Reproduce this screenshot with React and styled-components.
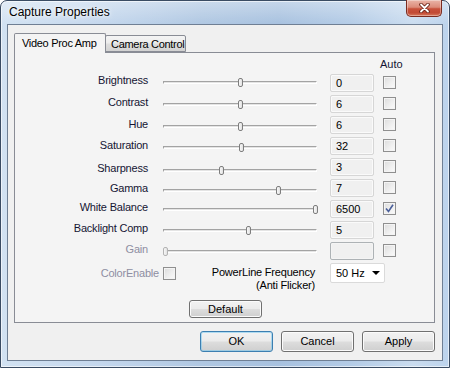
import React from 'react';
import styled, { createGlobalStyle } from 'styled-components';

const Global = createGlobalStyle`
  html, body { margin: 0; padding: 0; background: #ffffff; }
  body {
    width: 450px; height: 368px; overflow: hidden;
    font-family: "Liberation Sans", Arial, sans-serif;
    -webkit-font-smoothing: antialiased;
  }
  * { box-sizing: border-box; }
`;

const FONT = `"Liberation Sans", Arial, sans-serif`;

const Window = styled.div`
  width: 450px;
  height: 368px;
  display: flex;
  flex-direction: column;
  padding: 0 6px 6px 6px;
  border: 1px solid #3a4c63;
  border-radius: 7px 7px 0 0;
  background:
    linear-gradient(180deg, rgba(255,255,255,0.35) 0px, rgba(255,255,255,0) 24px),
    linear-gradient(90deg, #d2e2f2 0%, #c4d7ed 22%, #afc7e2 45%, #a7c1df 62%, #b3cbe6 78%, #cadcef 92%, #bcd3ec 100%);
  box-shadow: inset 0 0 0 1px rgba(255,255,255,0.6);
`;

const TitleBar = styled.div`
  flex: none;
  height: 23px;
  display: flex;
  align-items: flex-start;
`;

const Title = styled.div`
  padding: 4px 0 0 2px;
  font: 12px/14px ${FONT};
  color: #000;
  text-shadow: 0 0 6px rgba(255,255,255,0.95), 0 0 3px rgba(255,255,255,0.9);
`;

const CloseButton = styled.div`
  margin-left: auto;
  margin-right: 1px;
  margin-top: -1px;
  width: 36px;
  height: 17px;
  display: flex;
  align-items: center;
  justify-content: center;
  border: 1px solid #7b2c20;
  border-top: none;
  border-radius: 0 0 5px 5px;
  background: linear-gradient(180deg, #eab4a7 0%, #dc8c7a 45%, #c8503a 55%, #c24a34 80%, #d97a5c 100%);
  box-shadow: inset 0 0 0 1px rgba(255,255,255,0.35);
`;

const Client = styled.div`
  flex: 1;
  display: flex;
  flex-direction: column;
  background: #f0f0f0;
  border: 1px solid #6f7f94;
  padding: 8px 7px 0 6px;
`;

const TabStrip = styled.div`
  flex: none;
  height: 19px;
  display: flex;
  align-items: flex-end;
`;

const Tab = styled.div`
  position: relative;
  z-index: ${p => (p.$active ? 2 : 1)};
  height: ${p => (p.$active ? '20px' : '17px')};
  margin-bottom: ${p => (p.$active ? '-1px' : '0')};
  margin-left: ${p => (p.$active ? '0' : '-1px')};
  width: ${p => p.$w}px;
  padding-left: ${p => (p.$active ? '7px' : '5px')};
  border: 1px solid #898c95;
  border-bottom: ${p => (p.$active ? 'none' : '1px solid #898c95')};
  border-radius: 2px 2px 0 0;
  background: ${p =>
    p.$active
      ? '#f4f4f4'
      : 'linear-gradient(180deg, #f4f4f4 0%, #ececec 48%, #dedede 52%, #d2d2d2 100%)'};
  font: 11px/${p => (p.$active ? '18px' : '16px')} ${FONT};
  letter-spacing: -0.3px;
  color: #000;
  white-space: nowrap;
`;

const Panel = styled.div`
  flex: none;
  height: 271px;
  display: flex;
  flex-direction: column;
  background: #f4f4f4;
  border: 1px solid #898c95;
`;

const HeaderRow = styled.div`
  height: 21px;
  padding: 5px 0 0 365px;
  font: 11px/13px ${FONT};
  color: #141433;
`;

const Row = styled.div`
  height: 21px;
  display: flex;
  align-items: flex-start;
`;

const Group = styled.div`
  display: flex;
  margin-top: ${p => p.$dy}px;
`;

const Label = styled.div`
  width: ${p => p.$w || 145}px;
  padding-right: ${p => (p.$pr === undefined ? 12 : p.$pr)}px;
  text-align: right;
  font: 11px/13px ${FONT};
  letter-spacing: -0.2px;
  color: ${p => (p.$disabled ? '#8e8ea2' : '#141433')};
  white-space: nowrap;
`;

const SliderCell = styled.div`
  width: 170px;
  height: 13px;
  padding: 0 13px 0 3px;
`;

const TrackArea = styled.div`
  position: relative;
  height: 13px;
`;

const Track = styled.div`
  position: absolute;
  left: 0; right: 0; top: 7px;
  height: 3px;
  border-top: 1px solid #a3a3a3;
  border-left: 1px solid #a3a3a3;
  border-bottom: 1px solid #ffffff;
  border-right: 1px solid #ffffff;
  background: #e4e4e4;
`;

const Thumb = styled.div`
  position: absolute;
  top: 4px;
  width: 5px;
  height: 9px;
  margin-left: -2px;
  border: 1px solid ${p => (p.$disabled ? '#b4b4b4' : '#7e7e7e')};
  border-radius: 2px;
  background: linear-gradient(90deg, #f8f8f8, #e2e2e2);
`;

const ValueBox = styled.div`
  width: 44px;
  height: 18px;
  margin-right: 9px;
  padding-left: 5px;
  border: 1px solid ${p => (p.$disabled ? '#adb2b5' : '#d6d6d6')};
  border-radius: 2px;
  background: #f0f0f0;
  box-shadow: inset 0 0 0 1px ${p => (p.$disabled ? '#f4f4f4' : '#fafafa')};
  font: 11px/16px ${FONT};
  color: #000;
`;

const Check = styled.div`
  width: 13px;
  height: 13px;
  margin-top: ${p => p.$mt || 0}px;
  margin-left: ${p => p.$ml || 0}px;
  border: 1px solid #8f8f8f;
  background: linear-gradient(135deg, #dcdcdc 0%, #f0f0f0 60%, #fbfbfb 100%);
  box-shadow: inset 0 0 0 1px #f4f4f4;
  display: flex;
  align-items: center;
  justify-content: center;
`;

const BottomRow = styled.div`
  height: 20px;
  display: flex;
  align-items: flex-start;
`;

const PowerText = styled.div`
  width: 139px;
  margin-top: 3px;
  text-align: right;
  font: 11px/13px ${FONT};
  letter-spacing: -0.2px;
  color: #000;
`;

const Select = styled.div`
  width: 55px;
  height: 20px;
  margin-left: 15px;
  padding: 0 4px 0 5px;
  display: flex;
  align-items: center;
  justify-content: space-between;
  border: 1px solid #dadada;
  border-radius: 2px;
  background: #ffffff;
  font: 11px/18px ${FONT};
  color: #000;
`;

const Arrow = styled.div`
  width: 0;
  height: 0;
  border-left: 4px solid transparent;
  border-right: 4px solid transparent;
  border-top: 4px solid #000;
`;

const Button = styled.div`
  width: 73px;
  height: ${p => p.$h || 21}px;
  display: flex;
  align-items: center;
  justify-content: center;
  border: 1px solid ${p => (p.$default ? '#3c7fb1' : '#707070')};
  border-radius: 3px;
  background: linear-gradient(180deg, #f2f2f2 0%, #ebebeb 48%, #dddddd 52%, #cfcfcf 100%);
  box-shadow: inset 0 0 0 1px ${p => (p.$default ? 'rgba(120,200,240,0.55)' : '#fbfbfb')};
  font: 11px/13px ${FONT};
  color: #000;
`;

const DefaultWrap = styled.div`
  margin-top: 17px;
  display: flex;
  justify-content: center;
  padding-left: 2px;
`;

const ButtonRow = styled.div`
  margin-top: 8px;
  display: flex;
  justify-content: flex-end;
  gap: 8px;
`;

const rows = [
  { label: 'Brightness', value: '0', pos: 0.5, dy: 0 },
  { label: 'Contrast', value: '6', pos: 0.5, dy: 1 },
  { label: 'Hue', value: '6', pos: 0.5, dy: 2 },
  { label: 'Saturation', value: '32', pos: 0.508, dy: 2 },
  { label: 'Sharpness', value: '3', pos: 0.375, dy: 4 },
  { label: 'Gamma', value: '7', pos: 0.747, dy: 3 },
  { label: 'White Balance', value: '6500', pos: 0.987, dy: 1, checked: true },
  { label: 'Backlight Comp', value: '5', pos: 0.552, dy: 1 },
  { label: 'Gain', value: '', pos: 0.01, dy: 1, disabled: true },
];

const CheckMark = () => (
  <svg width="9" height="9" viewBox="0 0 9 9">
    <path d="M1 4.5 L3.5 7.5 L8 0.8" fill="none" stroke="#4a5f9a" strokeWidth="1.6" />
  </svg>
);

const CloseGlyph = () => (
  <svg width="11" height="10" viewBox="0 0 11 10">
    <path d="M2 1.5 L9 8.5 M9 1.5 L2 8.5" stroke="#6a2418" strokeWidth="3.6" strokeLinecap="round" />
    <path d="M2 1.5 L9 8.5 M9 1.5 L2 8.5" stroke="#ffffff" strokeWidth="1.8" strokeLinecap="round" />
  </svg>
);

export default function App() {
  return (
    <>
      <Global />
      <Window>
        <TitleBar>
          <Title>Capture Properties</Title>
          <CloseButton>
            <CloseGlyph />
          </CloseButton>
        </TitleBar>
        <Client>
          <TabStrip>
            <Tab $active $w={92}>Video Proc Amp</Tab>
            <Tab $w={81}>Camera Control</Tab>
          </TabStrip>
          <Panel>
            <HeaderRow>Auto</HeaderRow>
            {rows.map(r => (
              <Row key={r.label}>
                <Group $dy={r.dy}>
                  <Label $disabled={r.disabled}>{r.label}</Label>
                  <SliderCell>
                    <TrackArea>
                      <Track />
                      <Thumb $disabled={r.disabled} style={{ left: `${r.pos * 100}%` }} />
                    </TrackArea>
                  </SliderCell>
                </Group>
                <ValueBox $disabled={r.disabled}>{r.value}</ValueBox>
                <Check $mt={2}>{r.checked ? <CheckMark /> : null}</Check>
              </Row>
            ))}
            <BottomRow>
              <Group $dy={4}>
                <Label $disabled $w={144} $pr={0}>ColorEnable</Label>
              </Group>
              <Check $mt={4} $ml={4} />
              <PowerText>
                PowerLine Frequency
                <br />
                (Anti Flicker)
              </PowerText>
              <Select>
                <span>50 Hz</span>
                <Arrow />
              </Select>
            </BottomRow>
            <DefaultWrap>
              <Button $h={18}>Default</Button>
            </DefaultWrap>
          </Panel>
          <ButtonRow>
            <Button $default>OK</Button>
            <Button>Cancel</Button>
            <Button>Apply</Button>
          </ButtonRow>
        </Client>
      </Window>
    </>
  );
}
